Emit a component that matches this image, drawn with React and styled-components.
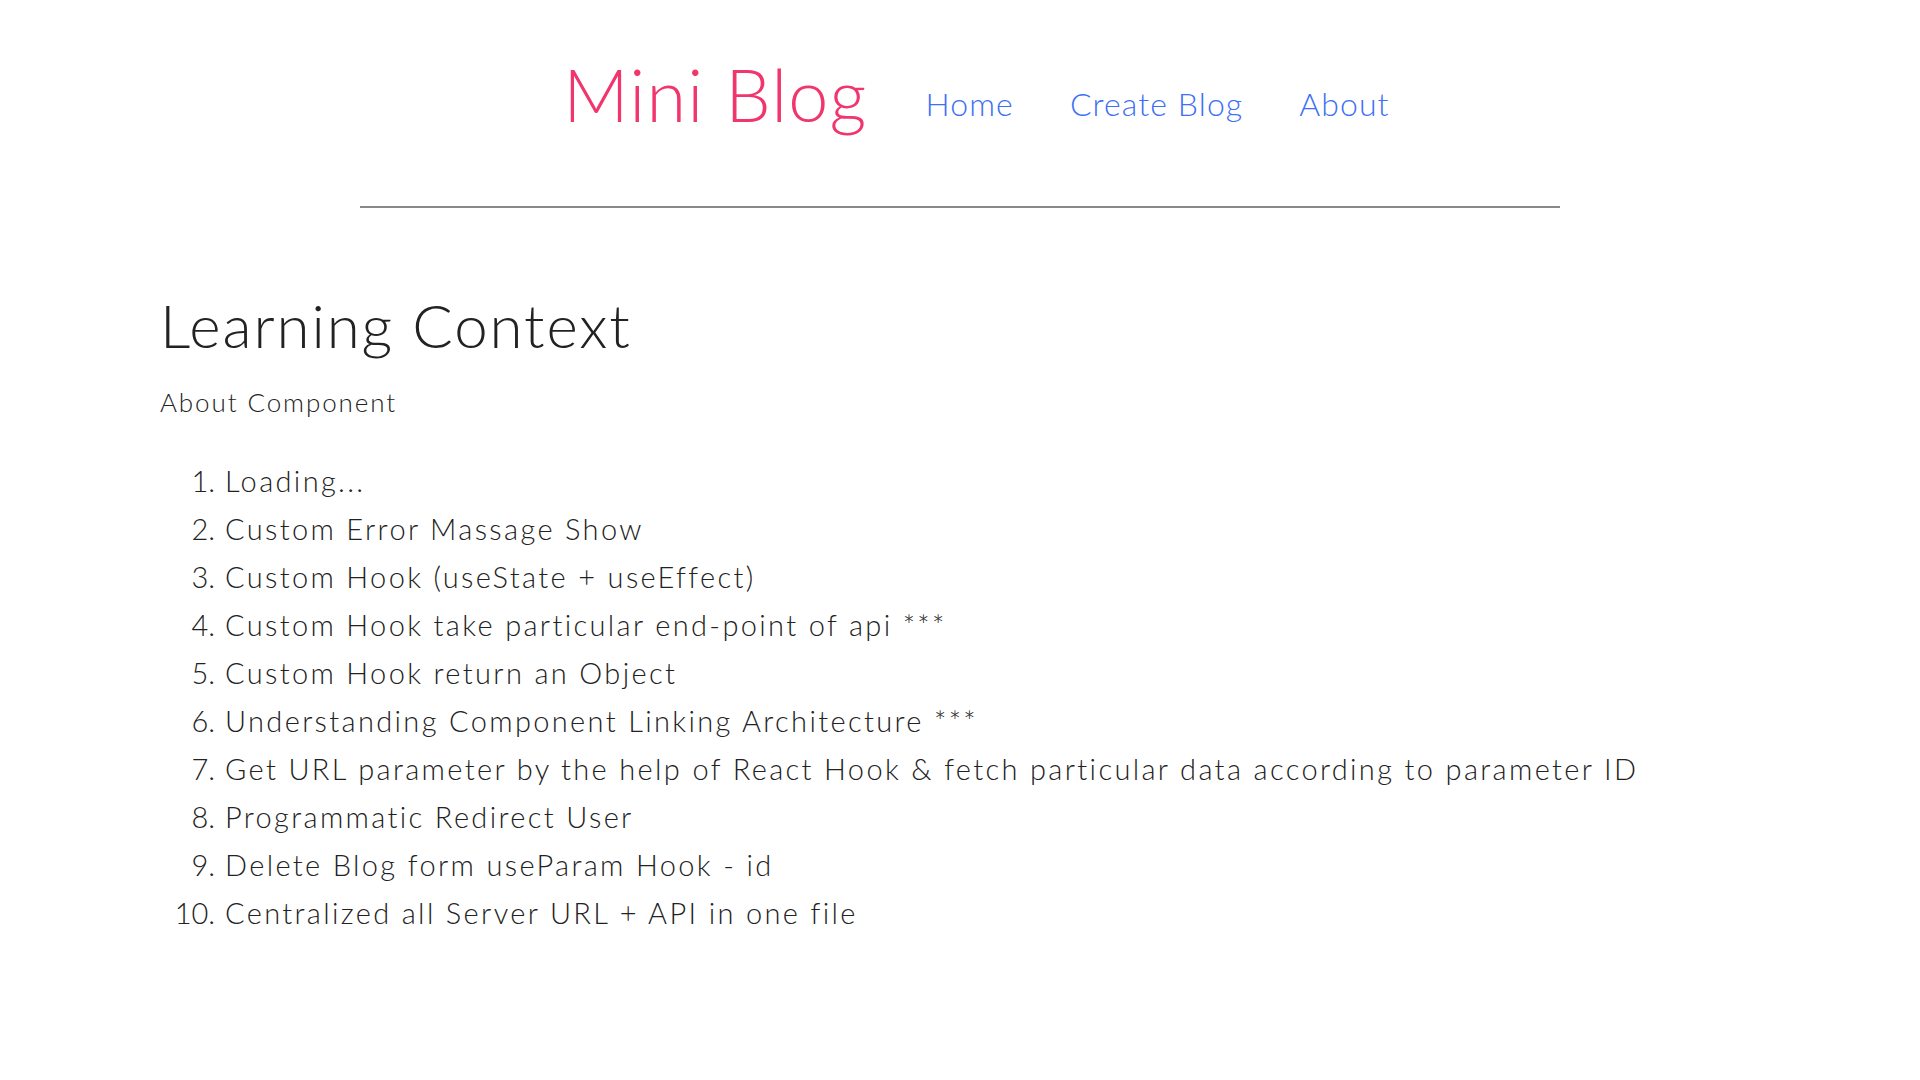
import React from 'react';
import styled, { createGlobalStyle } from "styled-components"

const GlobalStyle = createGlobalStyle`
    body {
        margin:0;
        background:#fff;
        font-family: "Lato", "Noto Sans", sans-serif;
        font-weight:300;
        color:#222;
    }
`

const topics = [
    "Loading...",
    "Custom Error Massage Show",
    "Custom Hook (useState + useEffect)",
    "Custom Hook take particular end-point of api ***",
    "Custom Hook return an Object",
    "Understanding Component Linking Architecture ***",
    "Get URL parameter by the help of React Hook & fetch particular data according to parameter ID",
    "Programmatic Redirect User",
    "Delete Blog form useParam Hook - id",
    "Centralized all Server URL + API in one file",
]

const App = () => {
    return (
        <>
            <GlobalStyle />
            <Navbar>
                <Brand>Mini Blog</Brand>
                <Links>
                    <NavLink href="#">Home</NavLink>
                    <NavLink href="#">Create Blog</NavLink>
                    <NavLink href="#">About</NavLink>
                </Links>
            </Navbar>
            <Content>
                <Title>Learning Context</Title>
                <Subtitle>About Component</Subtitle>
                <TopicList>
                    {topics.map((t, i) => (
                        <Topic key={i}><TopicText>{t}</TopicText></Topic>
                    ))}
                </TopicList>
            </Content>
        </>
    );
};

const Navbar = styled.nav`
    width:1200px;
    margin:0 auto;
    padding:58px 0 76px 33px;
    box-sizing:border-box;
    display:flex;
    justify-content:center;
    align-items:flex-start;
    border-bottom:2px solid #888;
`

const Brand = styled.h1`
    margin:0;
    font-size:72px;
    line-height:1;
    font-weight:300;
    letter-spacing:1.2px;
    color:#f1356d;
`

const Links = styled.div`
    display:flex;
    gap:56px;
    margin-left:58px;
    margin-top:30px;
`

const NavLink = styled.a`
    font-size:32px;
    line-height:1;
    font-weight:300;
    letter-spacing:1.1px;
    color:#3d6ff7;
    text-decoration:none;
`

const Content = styled.main`
    padding:87px 160px 0;
`

const Title = styled.h2`
    margin:0;
    font-size:60px;
    line-height:1;
    font-weight:300;
    letter-spacing:1.9px;
`

const Subtitle = styled.p`
    margin:34px 0 0;
    font-size:26px;
    line-height:1;
    letter-spacing:1.9px;
`

const TopicList = styled.ol`
    margin:42px 0 0;
    padding-left:63px;
`

const Topic = styled.li`
    font-size:29px;
    line-height:48px;
`

const TopicText = styled.span`
    margin-left:2px;
    letter-spacing:2.35px;
`

export default App;
